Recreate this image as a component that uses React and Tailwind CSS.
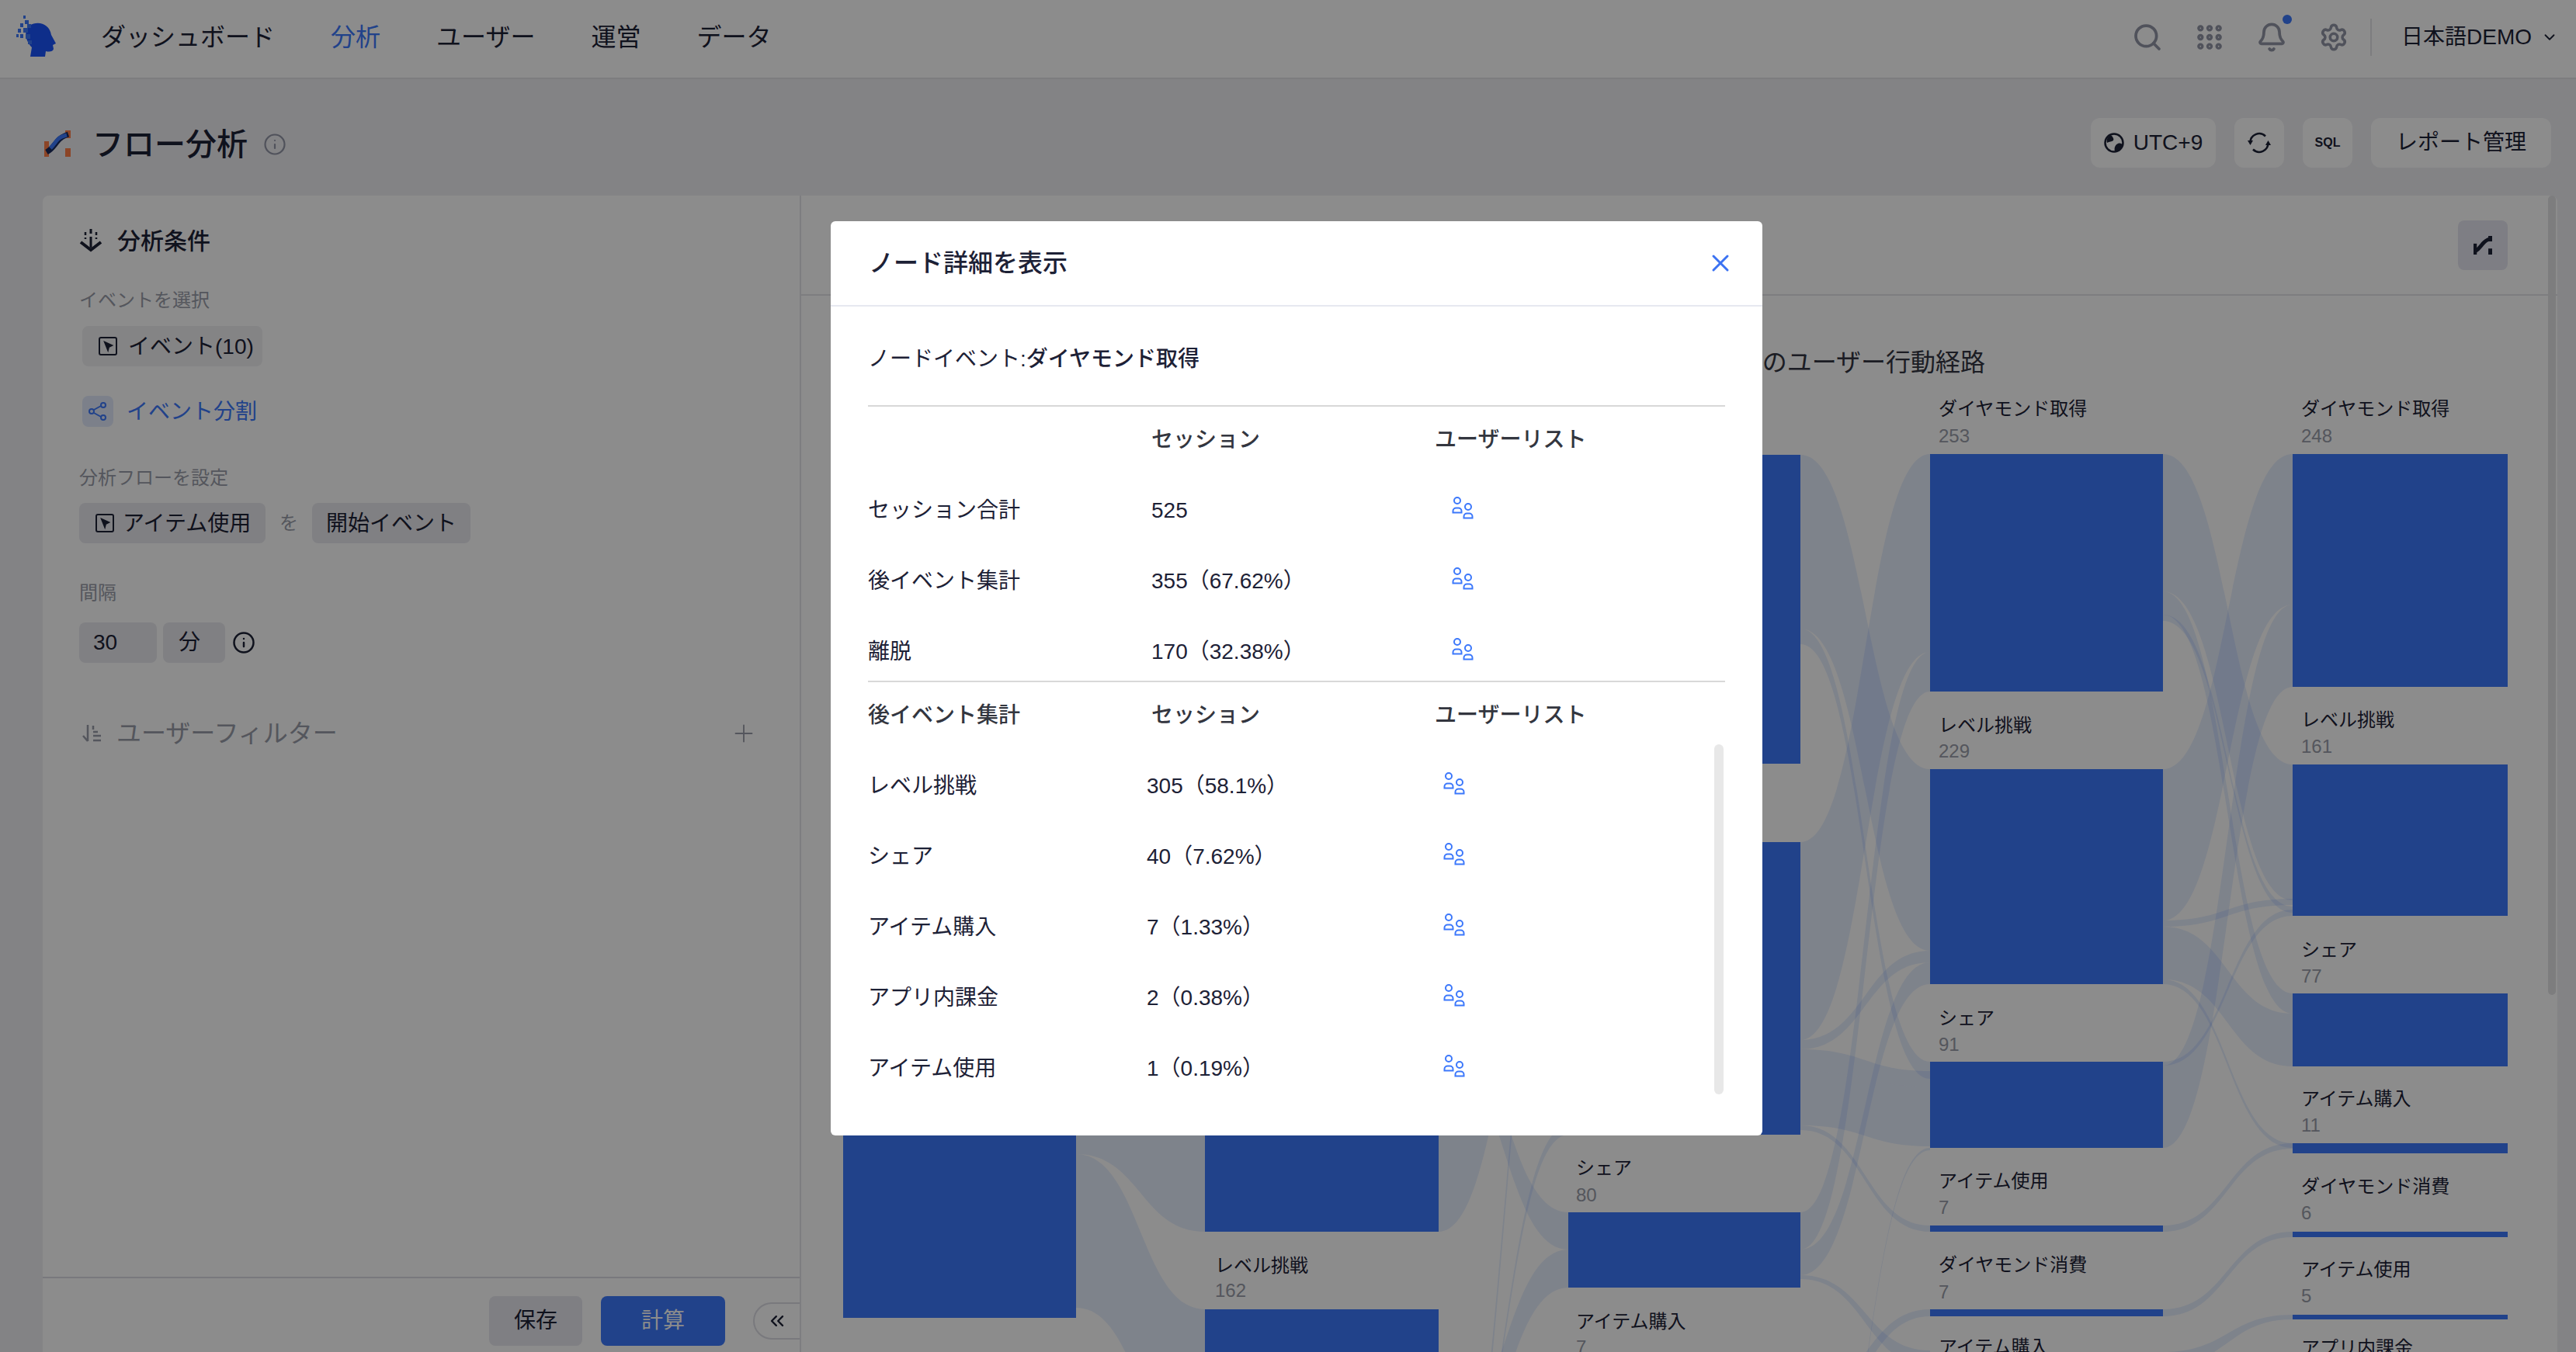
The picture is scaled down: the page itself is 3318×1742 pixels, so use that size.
import React from "react";
import { Search, Grip, Bell, Settings, ChevronDown, X, Info, Plus, ChevronsLeft } from "lucide-react";

const BLUE = "#3c78fb";

function Logo() {
  return (
    <svg width="52" height="54" viewBox="0 0 52 54" fill="#1b55fb">
      <path d="M17 13C28 6 43 11 45 25L51 36L47 38L48 43C47 47 42 47 38 46L37 53L18 53L20 41C12 33 9 20 17 13Z" />
      <g fill="#3c78fb">
        <rect x="9" y="0" width="3" height="4" /><rect x="11" y="6" width="5" height="5" /><rect x="5" y="10" width="4" height="5" />
        <rect x="14" y="11" width="5" height="5" /><rect x="2" y="17" width="4" height="5" /><rect x="9" y="16" width="6" height="6" />
        <rect x="0" y="24" width="3" height="4" /><rect x="5" y="24" width="4" height="5" /><rect x="12" y="24" width="6" height="6" /><rect x="15" y="32" width="5" height="5" />
      </g>
    </svg>
  );
}

function FlowIcon({ size = 34, mono = false }) {
  const o = mono ? "#1d2136" : "#ff7f47";
  const b = mono ? "#1d2136" : "#3c78fb";
  return (
    <svg width={size} height={size} viewBox="0 0 34 34">
      <rect x="0" y="14" width="6" height="20" fill={o} />
      <rect x="27" y="0" width="7" height="10" fill={o} />
      <rect x="27" y="23" width="7" height="11" fill={o} />
      <path d="M3 28C10 24 12 20 17 14C21 9 25 7 31 5" stroke={mono ? b : "#1a2a5c"} strokeWidth="7" fill="none" />
      {!mono && <path d="M8 23C12 19 14 15 18 11C21 8 25 7 29 6" stroke={b} strokeWidth="5" fill="none" />}
    </svg>
  );
}

function Cursor({ size = 26 }) {
  return (
    <svg width={size} height={size} viewBox="0 0 26 26" fill="none" stroke="#1d2136" strokeWidth="2">
      <rect x="2" y="2" width="22" height="22" rx="2" />
      <path d="M9 8L18 12L14 14L13 18Z" fill="#1d2136" />
    </svg>
  );
}

function Split() {
  return (
    <svg width="24" height="24" viewBox="0 0 24 24" fill="none" stroke="#3c78fb" strokeWidth="2">
      <circle cx="4" cy="12" r="3" /><circle cx="19" cy="4" r="3" /><circle cx="19" cy="20" r="3" />
      <path d="M7 10L16 5M7 14L16 19" />
    </svg>
  );
}

function Funnel() {
  return (
    <svg width="30" height="30" viewBox="0 0 30 30" fill="none" stroke="#1d2136" strokeWidth="3">
      <path d="M15 0V6M15 10V24" />
      <path d="M8 4V8M22 4V8M8 11V13M22 11V13" strokeWidth="2.5" />
      <path d="M2 17L15 27L28 17" strokeWidth="4" />
    </svg>
  );
}

function SortIcon() {
  return (
    <svg width="26" height="24" viewBox="0 0 26 24" fill="none" stroke="#9a9da9" strokeWidth="2.5">
      <path d="M8 1V22M2 15L8 22M15 2V7M15 10H21M15 15H25M15 21H25" />
    </svg>
  );
}

function Earth() {
  return (
    <svg width="26" height="26" viewBox="0 0 26 26">
      <circle cx="13" cy="13" r="11.5" fill="none" stroke="#1d2136" strokeWidth="2.5" />
      <path d="M9 3C12 6 13 8 12 10C10 12 7 11 4 13C3 8 5 5 9 3ZM14 24C13 20 14 16 18 14C21 13 23 14 24 16C23 20 19 24 14 24Z" fill="#1d2136" />
    </svg>
  );
}

function Sync() {
  return (
    <svg width="30" height="30" viewBox="0 0 30 30" fill="none" stroke="#1d2136" strokeWidth="2.5">
      <path d="M3.5 15A11.5 11.5 0 0 1 23 6.5" />
      <path d="M26.5 15A11.5 11.5 0 0 1 7 23.5" />
      <path d="M0 12H7L3.5 18Z" fill="#1d2136" stroke="none" />
      <path d="M23 18H30L26.5 12Z" fill="#1d2136" stroke="none" />
    </svg>
  );
}

function Users() {
  const body = "M1.5 20.5h11v-2a4 4 0 0 0-4-4h-3a4 4 0 0 0-4 4z";
  return (
    <svg width="29" height="29" viewBox="0 0 29 29" fill="none" stroke="#3c78fb" strokeWidth="2">
      <circle cx="7" cy="5" r="4" />
      <path d={body} />
      <circle cx="21" cy="13" r="4" />
      <path d={body} transform="translate(14 7)" />
    </svg>
  );
}

const link = (x0, x1, a, b) => {
  const m = (x0 + x1) / 2;
  return `M${x0} ${a[0]}C${m} ${a[0]} ${m} ${b[0]} ${x1} ${b[0]}L${x1} ${b[1]}C${m} ${b[1]} ${m} ${a[1]} ${x0} ${a[1]}Z`;
};

const links = [
  [1386, 1552, [1000, 1487], [1100, 1587]],
  [1386, 1552, [1487, 1685], [1687, 1890]],
  [1853, 2020, [1200, 1587], [1000, 1150]],
  [1853, 2020, [1300, 1350], [1562, 1610]],
  [1853, 2020, [1860, 1920], [1610, 1659]],
  [1853, 2020, [2050, 2070], [1085, 1105]],
  [1853, 2020, [2000, 2010], [1450, 1462]],
  [2319, 2486, [586, 810], [991, 1225]],
  [2319, 2486, [1085, 1340], [585, 840]],
  [2319, 2486, [810, 820], [1368, 1378]],
  [2319, 2486, [820, 830], [1378, 1390]],
  [2319, 2486, [1340, 1352], [1225, 1240]],
  [2319, 2486, [1352, 1380], [1380, 1400]],
  [2319, 2486, [1380, 1450], [1400, 1477]],
  [2319, 2486, [1562, 1610], [840, 891]],
  [2319, 2486, [1610, 1643], [1240, 1268]],
  [2319, 2486, [1450, 1456], [1579, 1587]],
  [2319, 2486, [1800, 1830], [1687, 1696]],
  [2319, 2486, [1643, 1648], [1740, 1760]],
  [2319, 2486, [2050, 2056], [1479, 1482]],
  [2786, 2953, [585, 762], [985, 1160]],
  [2786, 2953, [991, 1186], [585, 779]],
  [2786, 2953, [1373, 1479], [779, 885]],
  [2786, 2953, [1194, 1262], [1306, 1374]],
  [2786, 2953, [1186, 1194], [1158, 1166]],
  [2786, 2953, [762, 772], [1280, 1290]],
  [2786, 2953, [772, 780], [1290, 1298]],
  [2786, 2953, [780, 792], [1298, 1306]],
  [2786, 2953, [792, 800], [1168, 1176]],
  [2786, 2953, [1262, 1268], [1473, 1479]],
  [2786, 2953, [1368, 1373], [1172, 1180]],
  [2786, 2953, [1579, 1587], [1473, 1480]],
  [2786, 2953, [1687, 1696], [1587, 1594]],
  [2786, 2953, [1742, 1760], [1694, 1700]],
];

const nodes = [
  [1086, 1386, 1400, 1698],
  [1552, 1853, 1100, 1587], [1552, 1853, 1687, 1800],
  [2020, 2319, 586, 984], [2020, 2319, 1085, 1462], [2020, 2319, 1562, 1659],
  [2486, 2786, 585, 891], [2486, 2786, 991, 1268], [2486, 2786, 1368, 1479], [2486, 2786, 1579, 1587], [2486, 2786, 1687, 1696],
  [2953, 3230, 585, 885], [2953, 3230, 985, 1180], [2953, 3230, 1280, 1374], [2953, 3230, 1473, 1486], [2953, 3230, 1587, 1594], [2953, 3230, 1694, 1700],
];

const labels = [
  [1565, 1630, "レベル挑戦", 1662, "162"],
  [2030, 1504, "シェア", 1539, "80"],
  [2030, 1702, "アイテム購入", 1735, "7"],
  [2497, 526, "ダイヤモンド取得", 561, "253"],
  [2497, 934, "レベル挑戦", 967, "229"],
  [2497, 1311, "シェア", 1345, "91"],
  [2497, 1521, "アイテム使用", 1555, "7"],
  [2497, 1629, "ダイヤモンド消費", 1664, "7"],
  [2497, 1735, "アイテム購入"],
  [2964, 526, "ダイヤモンド取得", 561, "248"],
  [2964, 927, "レベル挑戦", 961, "161"],
  [2964, 1223, "シェア", 1257, "77"],
  [2964, 1415, "アイテム購入", 1449, "11"],
  [2964, 1528, "ダイヤモンド消費", 1562, "6"],
  [2964, 1635, "アイテム使用", 1669, "5"],
  [2964, 1736, "アプリ内課金"],
];

function Sankey() {
  return (
    <svg className="block" width="2262" height="1242" viewBox="1032 500 2262 1242">
      {links.map((l, i) => (
        <path key={i} d={link(...l)} fill={BLUE} fillOpacity="0.13" />
      ))}
      {nodes.map(([x0, x1, y0, y1], i) => (
        <rect key={i} x={x0} y={y0} width={x1 - x0} height={y1 - y0} fill={BLUE} />
      ))}
      {labels.map(([x, y, t, y2, n], i) => (
        <g key={i} dominantBaseline="central" fontSize="24">
          <text x={x} y={y} fill="#1d2136">{t}</text>
          {n && <text x={x} y={y2} fill="#9a9da9">{n}</text>}
        </g>
      ))}
    </svg>
  );
}

const Chip = ({ className = "", children }) => (
  <div className={`flex h-[52px] items-center rounded-lg text-[28px] text-[#1d2136] ${className}`}>{children}</div>
);

const SmallLabel = ({ className = "", children }) => (
  <div className={`h-[30px] text-[24px] leading-[30px] text-[#9a9da9] ${className}`}>{children}</div>
);

const TopBtn = ({ className = "", children }) => (
  <div className={`flex h-16 items-center justify-center rounded-xl bg-white text-[#1d2136] ${className}`}>{children}</div>
);

function Sidebar() {
  return (
    <div className="flex w-[977px] shrink-0 flex-col border-r-2 border-[#e4e4ea]">
      <div className="flex-1 pl-[47px] pr-[54px] pt-[40px]">
        <div className="flex h-9 items-center gap-[19px] text-[30px] font-medium text-[#1d2136]">
          <Funnel />
          <span>分析条件</span>
        </div>
        <SmallLabel className="mt-[44px]">イベントを選択</SmallLabel>
        <Chip className="ml-[4px] mt-[18px] w-[232px] gap-[13px] bg-[#f0f0f3] pl-[20px]">
          <Cursor /> <span className="pt-[2px]">イベント(10)</span>
        </Chip>
        <div className="ml-[4px] mt-[38px] flex h-10 items-center gap-[17px] text-[28px] text-[#3c78fb]">
          <div className="flex h-10 w-10 items-center justify-center rounded-lg bg-[#e2eafc]"><Split /></div>
          <span className="pt-[2px]">イベント分割</span>
        </div>
        <SmallLabel className="mt-[51px]">分析フローを設定</SmallLabel>
        <div className="mt-[17px] flex items-center">
          <Chip className="w-[240px] gap-[10px] bg-[#e9e9ef] pl-[20px]">
            <Cursor /> <span className="pt-[2px]">アイテム使用</span>
          </Chip>
          <span className="mx-[18px] text-[24px] text-[#9a9da9]">を</span>
          <Chip className="w-[204px] justify-center bg-[#e9e9ef] pt-[2px]">開始イベント</Chip>
        </div>
        <SmallLabel className="mt-[49px]">間隔</SmallLabel>
        <div className="mt-[23px] flex items-center">
          <Chip className="w-[100px] bg-[#e9e9ef] pl-[18px]">30</Chip>
          <Chip className="ml-2 w-20 bg-[#e9e9ef] pl-[20px]">分</Chip>
          <Info size={30} strokeWidth={2} className="ml-[9px] text-[#1d2136]" />
        </div>
        <div className="mt-[71px] flex h-10 items-center text-[32px] text-[#9a9da9]">
          <span className="ml-[3px]"><SortIcon /></span>
          <span className="ml-[19px] flex-1">ユーザーフィルター</span>
          <Plus size={36} strokeWidth={1.25} className="text-[#9a9da9]" />
        </div>
      </div>
      <div className="flex h-[97px] items-start justify-end border-t-2 border-[#dcdce4] pt-[23px]">
        <div className="flex h-16 w-[120px] items-center justify-center rounded-lg bg-[#e8e8ee] text-[28px] text-[#1d2136]">保存</div>
        <div className="ml-6 flex h-16 w-[160px] items-center justify-center rounded-lg bg-[#3c78fb] text-[28px] text-white">計算</div>
        <div className="ml-9 mt-2 flex h-12 w-[60px] items-center justify-center rounded-l-full border-2 border-r-0 border-[#dcdce4] bg-white">
          <ChevronsLeft size={28} strokeWidth={2} className="text-[#1d2136]" />
        </div>
      </div>
    </div>
  );
}

function ChartPanel() {
  return (
    <div className="relative min-w-0 flex-1">
      <div className="flex h-[129px] items-start justify-end border-b-2 border-[#e4e4ea] pr-[64px] pt-[32px]">
        <div className="flex h-16 w-16 items-center justify-center rounded-lg bg-[#e6e6f0]"><FlowIcon size={24} mono /></div>
      </div>
      <div className="h-[119px] pr-[737px] pt-[66px] text-right text-[32px] leading-[40px] text-[#333642]">のユーザー行動経路</div>
      <Sankey />
      <div className="absolute right-[2px] top-0 h-[1030px] w-[10px] rounded-full bg-[#e4e4e6]" />
    </div>
  );
}

const TH = ({ children }) => <div className="pt-2 text-[28px] font-medium text-[#33363f]">{children}</div>;

function HeaderRow({ first = "" }) {
  return (
    <div className="grid h-[78px] grid-cols-[365px_365px_1fr] items-center">
      <TH>{first}</TH>
      <TH>セッション</TH>
      <TH>ユーザーリスト</TH>
    </div>
  );
}

function Modal() {
  const top = [["セッション合計", "525"], ["後イベント集計", "355（67.62%）"], ["離脱", "170（32.38%）"]];
  const next = [["レベル挑戦", "305（58.1%）"], ["シェア", "40（7.62%）"], ["アイテム購入", "7（1.33%）"], ["アプリ内課金", "2（0.38%）"], ["アイテム使用", "1（0.19%）"]];
  return (
    <div className="absolute left-[1070px] top-[285px] h-[1178px] w-[1200px] overflow-hidden rounded-md bg-white text-[#1d2136]">
      <div className="flex h-[110px] items-center justify-between border-b-2 border-[#e6e8f0] pl-[49px] pr-[36px]">
        <span className="text-[32px] font-medium">ノード詳細を表示</span>
        <X size={36} strokeWidth={2} className="text-[#3b72f2]" />
      </div>
      <div className="px-[48px]">
        <div className="flex h-[129px] items-center border-b-2 border-[#d8d8d8] pt-2 text-[28px]">
          ノードイベント:<span className="font-medium">ダイヤモンド取得</span>
        </div>
        <HeaderRow />
        <div className="mt-[11px] flex flex-col gap-[9px]">
          {top.map(([a, b]) => (
            <div key={a} className="grid h-[82px] grid-cols-[365px_365px_1fr] items-center text-[28px]">
              <div className="pt-2">{a}</div>
              <div className="pt-2">{b}</div>
              <div className="pl-[22px]"><Users /></div>
            </div>
          ))}
        </div>
        <div className="border-t-2 border-[#d8d8d8]">
          <HeaderRow first="後イベント集計" />
        </div>
        <div className="relative mt-[2px] flex flex-col gap-[9px] pt-[9px]">
          {next.map(([a, b]) => (
            <div key={a} className="grid h-[82px] grid-cols-[359px_382px_1fr] items-center text-[28px]">
              <div className="pt-2">{a}</div>
              <div className="pt-2">{b}</div>
              <div><Users /></div>
            </div>
          ))}
          <div className="absolute right-[2px] top-0 h-[451px] w-3 rounded-full bg-[#e8e8e8]" />
        </div>
      </div>
    </div>
  );
}

export default function App() {
  return (
    <div className="relative h-[1742px] w-[3318px] overflow-hidden bg-[#eeeef2] font-[family-name:'Liberation_Sans','Noto_Sans_CJK_JP',sans-serif]">
      <header className="flex h-[102px] items-center border-b-2 border-[#e4e4e8] bg-white">
        <div className="ml-[21px] mb-[6px]"><Logo /></div>
        <nav className="ml-[57px] mb-1 flex gap-[72px] text-[32px] text-[#1d2136]">
          <span>ダッシュボード</span>
          <span className="text-[#3c78fb]">分析</span>
          <span>ユーザー</span>
          <span>運営</span>
          <span>データ</span>
        </nav>
        <div className="mb-1 ml-auto flex items-center text-[#9295a6]">
          <Search size={40} strokeWidth={2.25} />
          <Grip size={40} strokeWidth={3} className="ml-[40px]" />
          <div className="relative ml-[40px]">
            <Bell size={40} strokeWidth={2.25} />
            <div className="absolute right-[-6px] top-[-9px] h-3 w-3 rounded-full bg-[#3c78fb]" />
          </div>
          <Settings size={38} strokeWidth={2.25} className="ml-[41px]" />
          <div className="ml-[28px] h-12 w-0.5 bg-[#e4e4e8]" />
          <span className="ml-[38px] text-[28px] text-[#1d2136]">日本語DEMO</span>
          <ChevronDown size={22} strokeWidth={2} className="ml-[12px] mr-[23px] text-[#1d2136]" />
        </div>
      </header>
      <div className="flex h-[150px] items-start pl-[57px] pr-[32px] pt-[66px]">
        <FlowIcon />
        <h1 className="ml-[28px] mt-[-4px] text-[40px] font-medium leading-[44px] text-[#1d2136]">フロー分析</h1>
        <Info size={30} strokeWidth={1.75} className="ml-[20px] mt-[3px] text-[#9295a6]" />
        <div className="ml-auto mt-[-16px] flex gap-6 text-[28px]">
          <TopBtn className="w-[161px] gap-[12px]"><Earth /><span>UTC+9</span></TopBtn>
          <TopBtn className="w-16"><Sync /></TopBtn>
          <TopBtn className="w-16"><span className="text-[16px] font-bold">SQL</span></TopBtn>
          <TopBtn className="w-[232px]">レポート管理</TopBtn>
        </div>
      </div>
      <div className="ml-[55px] mr-[24px] flex h-[1490px] rounded-t-lg bg-white">
        <Sidebar />
        <ChartPanel />
      </div>
      <div className="absolute inset-0 bg-black/45" />
      <Modal />
    </div>
  );
}
